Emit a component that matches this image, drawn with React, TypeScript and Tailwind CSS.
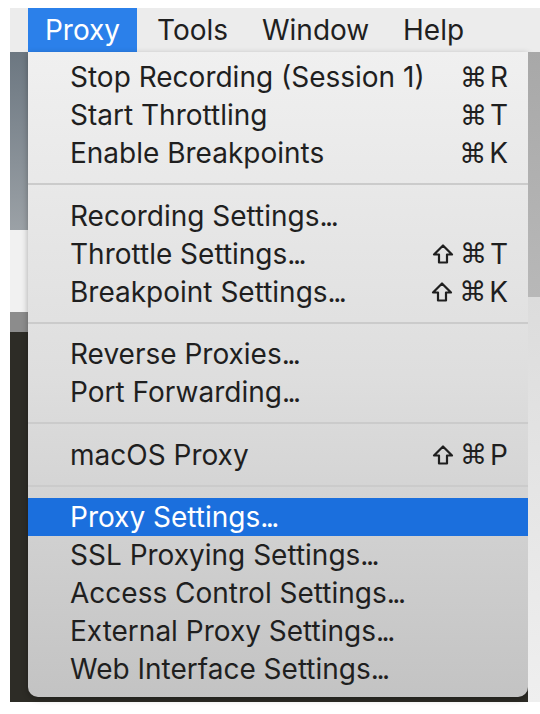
import React from "react";

type Item = { label: string; keys?: string; shift?: boolean; active?: boolean };

const groups: Item[][] = [
  [
    { label: "Stop Recording (Session 1)", keys: "R" },
    { label: "Start Throttling", keys: "T" },
    { label: "Enable Breakpoints", keys: "K" },
  ],
  [
    { label: "Recording Settings..." },
    { label: "Throttle Settings...", keys: "T", shift: true },
    { label: "Breakpoint Settings...", keys: "K", shift: true },
  ],
  [{ label: "Reverse Proxies..." }, { label: "Port Forwarding..." }],
  [{ label: "macOS Proxy", keys: "P", shift: true }],
  [
    { label: "Proxy Settings...", active: true },
    { label: "SSL Proxying Settings..." },
    { label: "Access Control Settings..." },
    { label: "External Proxy Settings..." },
    { label: "Web Interface Settings..." },
  ],
];

const ShiftIcon = () => (
  <svg width="22" height="22" viewBox="0 0 22 22" fill="none" stroke="currentColor" strokeWidth="2.2" strokeLinejoin="round">
    <path d="M11 2.5 L20 11.5 H15 V19.5 H7 V11.5 H2 Z" />
  </svg>
);

// mac menus draw the trailing dots tight
const Label = ({ text }: { text: string }) => {
  if (!text.endsWith("...")) return <span>{text}</span>;
  return (
    <span>
      {text.slice(0, -3)}
      <span className="tracking-[-2.5px]">...</span>
    </span>
  );
};

const MenuRow = ({ item }: { item: Item }) => (
  <div
    className={
      "flex h-[38px] items-center justify-between pl-[42px] pr-[20px] " +
      (item.active ? "bg-[#1b6fdd] text-white" : "text-[#1f1f1f]")
    }
  >
    <Label text={item.label} />
    {item.keys && (
      <span className="flex items-center">
        {item.shift && (
          <span className="mr-[6px] flex">
            <ShiftIcon />
          </span>
        )}
        <span className="mr-[3px] font-['DejaVu_Sans',sans-serif] text-[27px]">⌘</span>
        <span>{item.keys}</span>
      </span>
    )}
  </div>
);

export default function App() {
  return (
    <div className="h-[714px] w-[540px] bg-white pl-[10px] pt-[8px] font-['Inter','Liberation_Sans',sans-serif] text-[28px] leading-none">
      <div className="flex h-[694px] w-[530px] flex-col">
        {/* menu bar */}
        <div className="flex h-[44px] items-stretch bg-[#ececec] pl-[18px] text-[#1f1f1f]">
          <div className="flex w-[109px] items-center justify-center bg-[#2b80ea] text-white">Proxy</div>
          <div className="flex w-[105px] items-center pl-[20px]">Tools</div>
          <div className="flex w-[141px] items-center pl-[20px]">Window</div>
          <div className="flex items-center pl-[20px]">Help</div>
        </div>

        <div className="flex flex-1">
          {/* desktop behind, left */}
          <div className="flex w-[18px] flex-col">
            <div className="h-[178px] bg-gradient-to-b from-[#6c7781] to-[#9ba1a6]" />
            <div className="h-[82px] bg-[#f1f1f1]" />
            <div className="h-[20px] bg-[#8c8c8c]" />
            <div className="flex-1 bg-[#2d2c26]" />
          </div>

          {/* the menu */}
          <div className="flex w-[500px] flex-col bg-[#2d2c26]">
            <div className="h-[645px] rounded-b-[10px] bg-gradient-to-b from-[#f0f0f0] via-[#dedede] to-[#c3c3c3] pb-[9px] pt-[6px] shadow-[0_2px_6px_rgba(0,0,0,0.3)]">
              {groups.map((g, gi) => (
                <div key={gi}>
                  {gi > 0 && (
                    <div className="flex h-[24.5px] items-center">
                      <div className="h-[2px] w-full bg-[#cbcbcb]" />
                    </div>
                  )}
                  {g.map((item) => (
                    <MenuRow key={item.label} item={item} />
                  ))}
                </div>
              ))}
            </div>
          </div>

          {/* desktop behind, right */}
          <div className="flex w-[12px] flex-col">
            <div className="h-[245px] bg-gradient-to-b from-[#a8a8a8] to-[#b8b8b8]" />
            <div className="flex-1 bg-gradient-to-b from-[#dcdcdc] to-[#efefef]" />
          </div>
        </div>
      </div>
    </div>
  );
}
